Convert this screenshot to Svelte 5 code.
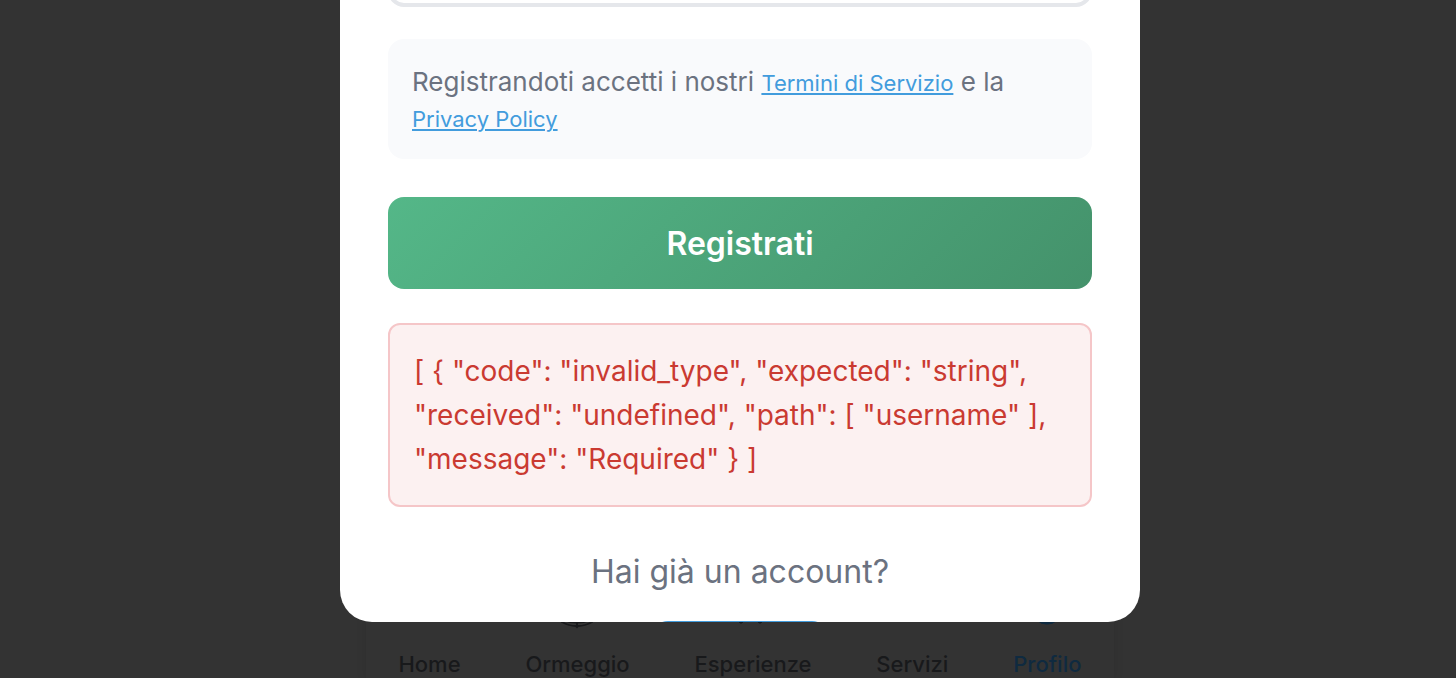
<script lang="ts">
  const tabs = [
    { label: 'Home', icon: 'home' },
    { label: 'Ormeggio', icon: 'anchor' },
    { label: 'Esperienze', icon: 'show' },
    { label: 'Servizi', icon: 'bell' },
    { label: 'Profilo', icon: 'user' },
  ];
  const current = 'Profilo';

  const error =
    '[ { "code": "invalid_type", "expected": "string", "received": "undefined", "path": [ "username" ], "message": "Required" } ]';
</script>

<div class="page">
  <nav class="tabs" aria-label="Principale">
    {#each tabs as tab}
      <a href="#{tab.icon}" class:active={tab.label === current}>
        <svg viewBox="0 0 40 40" aria-hidden="true">
          {#if tab.icon === 'anchor'}
            <circle cx="19" cy="7" r="4" />
            <path d="M19 11V37M11 17H27" />
            <path d="M2 24L4 32Q11 36 18 36L19 37L20 36Q27 36 34 32L36 24" />
            <path d="M4 29Q19 36 34 29" />
          {:else if tab.icon === 'show'}
            <path d="M4 8H32V26H4Z" />
            <path class="solid" d="M3 28L7 33H9L13 28ZM22 28L26 33H28L32 28Z" />
          {:else if tab.icon === 'user'}
            <rect class="solid" x="7" y="6" width="26" height="28" rx="12" />
          {:else if tab.icon === 'home'}
            <path d="M6 18L20 6L34 18V30H6Z" />
          {:else}
            <path d="M8 28H32M10 26A10 14 0 0 1 30 26" />
          {/if}
        </svg>
        <span>{tab.label}</span>
      </a>
    {/each}
  </nav>

  <main class="dialog">
    <input class="field" type="password" aria-label="Conferma password" />
    <p class="terms">
      Registrandoti accetti i nostri <a href="#termini">Termini di Servizio</a> e la
      <a href="#privacy">Privacy Policy</a>
    </p>
    <button class="submit" type="submit">Registrati</button>
    <p class="error" role="alert">{error}</p>
    <p class="question">Hai già un account?</p>
    <button class="login" type="button" aria-label="Accedi"></button>
  </main>
</div>

<style>
  :global(body) {
    margin: 0;
    background: #333;
  }

  .page {
    box-sizing: border-box;
    display: grid;
    grid-template: 100vh / minmax(0, 800px);
    justify-content: center;
    padding-left: 24px;
    overflow: hidden;
    font-family: Inter, sans-serif;
  }

  .tabs,
  .dialog {
    grid-area: 1 / 1;
  }

  .tabs {
    align-self: end;
    display: flex;
    justify-content: space-around;
    margin: 0 26px;
    background: #333;
    box-shadow: 0 0 10px rgba(0, 0, 0, 0.1);
  }

  .tabs a {
    display: flex;
    flex-direction: column;
    align-items: center;
    gap: 20px;
    color: #18191b;
    font-size: 22px;
    font-weight: 500;
    line-height: 28px;
    text-decoration: none;
  }

  .tabs a.active {
    color: #0f2a40;
  }

  .tabs svg {
    width: 40px;
    height: 40px;
    fill: none;
    stroke: currentColor;
    stroke-width: 2;
  }

  .tabs .solid {
    fill: currentColor;
    stroke-width: 1;
  }

  .dialog {
    box-sizing: border-box;
    z-index: 1;
    display: flex;
    flex-direction: column;
    height: calc(100vh - 56px);
    padding: 0 48px;
    overflow: hidden;
    border-radius: 0 0 32px 32px;
    background: #fff;
  }

  .dialog > * {
    flex-shrink: 0;
  }

  .field {
    box-sizing: border-box;
    height: 92px;
    margin: -85px 0 32px;
    border: 4px solid #e5e7eb;
    border-radius: 16px;
    background: #fff;
  }

  .terms {
    margin: 0 0 38px;
    padding: 25px 24px 23px;
    border-radius: 16px;
    background: #f9fafc;
    color: #6b7280;
    font-size: 26px;
    line-height: 36px;
  }

  .terms a {
    color: #429cdd;
    font-size: 22px;
    line-height: 28px;
    text-decoration-thickness: 2px;
    text-underline-offset: 2px;
  }

  .submit {
    height: 92px;
    margin: 0 0 34px;
    padding: 0;
    border: 0;
    border-radius: 16px;
    background: linear-gradient(135deg, #54b788, #44926b);
    color: #fff;
    font: 600 32px Inter, sans-serif;
  }

  .error {
    margin: 0 0 45px;
    padding: 24px;
    border: 2px solid #f5c6c8;
    border-radius: 12px;
    background: #fcf1f1;
    color: #ca3a31;
    font-size: 28px;
    line-height: 44px;
  }

  .question {
    margin: 0 0 29px;
    color: #6b7280;
    font-size: 32px;
    line-height: 40px;
    text-align: center;
  }

  .login {
    align-self: center;
    width: 176px;
    height: 72px;
    border: 0;
    border-radius: 16px;
    background: #429cdd;
  }
</style>
